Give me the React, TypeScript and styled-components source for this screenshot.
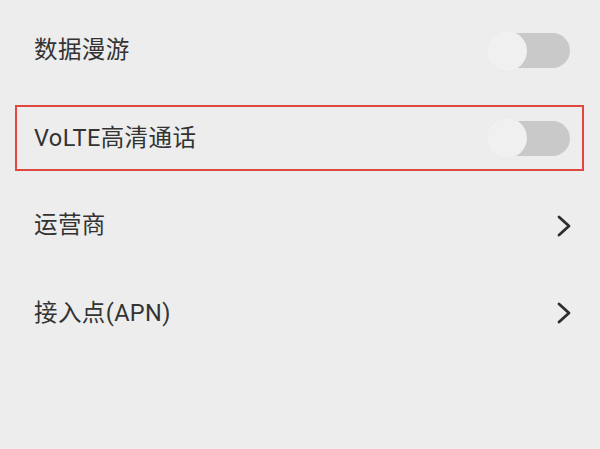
import React from 'react'
import styled, { createGlobalStyle } from 'styled-components'

type Item = {
  label: string
  kind: 'switch' | 'link'
  highlight?: boolean
}

const items: Item[] = [
  { label: '数据漫游', kind: 'switch' },
  { label: 'VoLTE高清通话', kind: 'switch', highlight: true },
  { label: '运营商', kind: 'link' },
  { label: '接入点(APN)', kind: 'link' },
]

export default function App() {
  return (
    <>
      <GlobalStyle />
      <Page>
        <List>
          {items.map((item) => (
            <Row key={item.label}>
              <Inner $highlight={item.highlight}>
                <Label>{item.label}</Label>
                {item.kind === 'switch' ? (
                  <Switch>
                    <Track />
                    <Knob />
                  </Switch>
                ) : (
                  <Chevron viewBox="0 0 16 24">
                    <polyline points="3,3 13,12 3,21" />
                  </Chevron>
                )}
              </Inner>
            </Row>
          ))}
        </List>
      </Page>
    </>
  )
}

///////////////////////////////////////////////////////////////////////////////////

const GlobalStyle = createGlobalStyle`
  html, body {
    margin: 0;
    padding: 0;
    background: #ededed;
  }
`

const Page = styled.div`
  width: 600px;
  height: 449px;
  background: #ededed;
  font-family: Roboto, 'Noto Sans CJK SC', sans-serif;
  color: #333333;
  overflow: hidden;
`

const List = styled.div`
  padding-top: 7px;
  display: flex;
  flex-direction: column;
`

const Row = styled.div`
  height: 87.5px;
  display: flex;
  align-items: center;
  padding: 0 16px 0 15px;
`

const Inner = styled.div<{ $highlight?: boolean }>`
  flex: 1;
  height: 62px;
  display: flex;
  align-items: center;
  justify-content: space-between;
  padding: 0 12px 0 17px;
  border: 2px solid ${(p) => (p.$highlight ? '#e0473f' : 'transparent')};
`

const Label = styled.span`
  font-size: 23.5px;
  line-height: 1;
  letter-spacing: 0.4px;
`

const Switch = styled.div`
  position: relative;
  width: 83px;
  height: 40px;
  display: flex;
  align-items: center;
  justify-content: flex-end;
`

const Track = styled.div`
  width: 78px;
  height: 35px;
  border-radius: 18px;
  background: #c9c9c9;
`

const Knob = styled.div`
  position: absolute;
  left: 0;
  top: 0;
  width: 40px;
  height: 40px;
  border-radius: 50%;
  background: #f0f0f0;
  box-shadow: 0 0 2px rgba(0, 0, 0, 0.04);
`

const Chevron = styled.svg`
  width: 16px;
  height: 24px;
  margin-right: -2px;
  fill: none;
  stroke: #2e2e2e;
  stroke-width: 2.8;
  stroke-linecap: round;
  stroke-linejoin: round;
`
